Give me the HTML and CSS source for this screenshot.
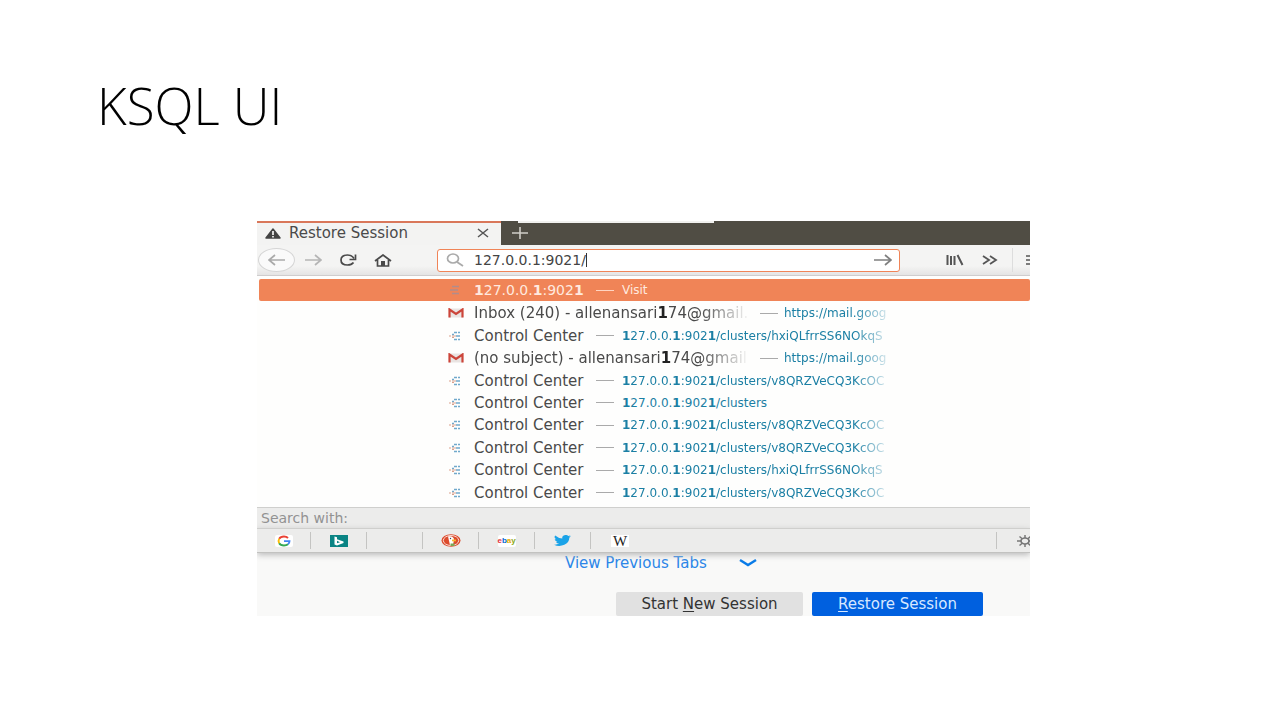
FILE: index.html
```html
<!DOCTYPE html>
<html lang="en">
<head>
<meta charset="utf-8">
<title>KSQL UI</title>
<link rel="stylesheet" href="styles.css">
</head>
<body>
<svg class="defs" aria-hidden="true">
  <symbol id="gmail" viewBox="0 0 16 10"><path d="M1 .5h14v9H1z" fill="#e9e4e2"/><path d="M1.500 9.500V1.500L8 6l6.500-4.500v8" fill="none" stroke="#cc453a" stroke-width="2.200"/></symbol>
  <symbol id="center" viewBox="0 0 14 10"><path d="M6 1.500h3M10 1.500h2M4 3.500h2M6 8.500h3M10 8.500h2M8 5h4" stroke="#70a9cc" stroke-width="1.300"/><path d="M1 5h2M4 5h4M4 6.500h2" stroke="#d9a08c" stroke-width="1.200"/></symbol>
</svg>
<main class="slide">
  <h1 class="title">KSQL UI</h1>
  <section class="browser">
    <div class="tabs">
      <div class="tab">
        <svg width="16" height="11" viewBox="0 0 16 11"><path d="M8 1 15 10H1Z" fill="#444" stroke="#444" stroke-width="1.500" stroke-linejoin="round"/><path d="M8 3v4M8 8v1.500" stroke="#fff" stroke-width="1.600"/></svg>
        <span class="tab-name">Restore Session</span>
        <button class="icon" aria-label="Close tab"><svg width="12" height="10" viewBox="0 0 12 10"><path d="m1 1 10 8M11 1 1 9" stroke="#555" stroke-width="1.500"/></svg></button>
      </div>
      <button class="icon new-tab" aria-label="New tab"><svg width="16" height="12" viewBox="0 0 16 12"><path d="M0 6h16M8 0v12" stroke="#d0cec8" stroke-width="1.600"/></svg></button>
      <span class="edge"></span>
    </div>
    <div class="toolbar">
      <button class="icon back" aria-label="Back"><svg width="18" height="12" viewBox="0 0 18 12"><path d="M17 6H1M7 1 1 6l6 5" fill="none" stroke="#aaa" stroke-width="1.700"/></svg></button>
      <button class="icon nav" aria-label="Forward"><svg width="18" height="12" viewBox="0 0 18 12"><path d="M1 6h16M11 1l6 5-6 5" fill="none" stroke="#b5b5b5" stroke-width="1.700"/></svg></button>
      <button class="icon nav" aria-label="Reload"><svg width="18" height="12" viewBox="0 0 18 12"><path d="M14.500 8.500C13 10.500 11 11 8.500 11 4.500 11 2 9 2 6s2.500-5 6.500-5C11 1 13.500 2 15 4.500" fill="none" stroke="#4a4a4a" stroke-width="1.700"/><path d="M16.500 .5V5.500H10.500" fill="none" stroke="#4a4a4a" stroke-width="1.700"/></svg></button>
      <button class="icon nav" aria-label="Home"><svg width="18" height="13" viewBox="0 0 18 13"><path d="m1 7 8-6 8 6M3.500 6v6h11V6" fill="none" stroke="#4a4a4a" stroke-width="1.700"/><path d="M7 12V7h4v5" fill="#4a4a4a"/></svg></button>
      <label class="address">
        <svg width="18" height="14" viewBox="0 0 18 14"><ellipse cx="7" cy="5.500" rx="5.500" ry="4.500" fill="none" stroke="#aaa" stroke-width="1.700"/><path d="m11 9 6 4" stroke="#aaa" stroke-width="1.800"/></svg>
        <input class="url-input" type="text" value="127.0.0.1:9021/" size="1" aria-label="Address">
        <span class="caret"></span>
        <button class="icon go" aria-label="Go"><svg width="18" height="12" viewBox="0 0 18 12"><path d="M0 6h17M11 1l6 5-6 5" fill="none" stroke="#808080" stroke-width="1.700"/></svg></button>
      </label>
      <button class="icon library" aria-label="Library"><svg width="18" height="12" viewBox="0 0 18 12"><path d="M1.500 1v10M5 2v9M8.500 2v9M11.500 1l5 10" stroke="#555" stroke-width="2"/></svg></button>
      <button class="icon more" aria-label="More tools"><svg width="16" height="10" viewBox="0 0 16 10"><path d="m1 1 6 4-6 4M8 1l6 4-6 4" fill="none" stroke="#555" stroke-width="1.800"/></svg></button>
      <button class="icon menu" aria-label="Menu"><svg width="16" height="10" viewBox="0 0 16 10"><path d="M0 1h16M0 5h16M0 9h16" stroke="#555" stroke-width="1.600"/></svg></button>
    </div>
    <div class="results">
      <div class="row selected">
        <svg class="fav" width="14" height="10" viewBox="0 0 14 10"><path d="M4 1.500h7M2 5h8M4 8.500h7" stroke="#b08c8c" stroke-width="1.500"/></svg>
        <span class="visit-name"><b>1</b>27.0.0.<b>1</b>:902<b>1</b></span><span class="dash"></span><span class="visit">Visit</span>
      </div>
      <div class="list">
        <div class="row"><svg class="fav mail"><use href="#gmail"/></svg><span class="name long">Inbox (240) - allenansari<b>1</b>74@gmail.</span><span class="dash"></span><a class="url" href="#">https://mail.goog</a></div>
        <div class="row"><svg class="fav"><use href="#center"/></svg><span class="name">Control Center</span><span class="dash"></span><a class="url" href="#"><b>1</b>27.0.0.<b>1</b>:902<b>1</b>/clusters/hxiQLfrrSS6NOkqS</a></div>
        <div class="row"><svg class="fav mail"><use href="#gmail"/></svg><span class="name long">(no subject) - allenansari<b>1</b>74@gmail</span><span class="dash"></span><a class="url" href="#">https://mail.goog</a></div>
        <div class="row"><svg class="fav"><use href="#center"/></svg><span class="name">Control Center</span><span class="dash"></span><a class="url" href="#"><b>1</b>27.0.0.<b>1</b>:902<b>1</b>/clusters/v8QRZVeCQ3KcOC</a></div>
        <div class="row"><svg class="fav"><use href="#center"/></svg><span class="name">Control Center</span><span class="dash"></span><a class="url" href="#"><b>1</b>27.0.0.<b>1</b>:902<b>1</b>/clusters</a></div>
        <div class="row"><svg class="fav"><use href="#center"/></svg><span class="name">Control Center</span><span class="dash"></span><a class="url" href="#"><b>1</b>27.0.0.<b>1</b>:902<b>1</b>/clusters/v8QRZVeCQ3KcOC</a></div>
        <div class="row"><svg class="fav"><use href="#center"/></svg><span class="name">Control Center</span><span class="dash"></span><a class="url" href="#"><b>1</b>27.0.0.<b>1</b>:902<b>1</b>/clusters/v8QRZVeCQ3KcOC</a></div>
        <div class="row"><svg class="fav"><use href="#center"/></svg><span class="name">Control Center</span><span class="dash"></span><a class="url" href="#"><b>1</b>27.0.0.<b>1</b>:902<b>1</b>/clusters/hxiQLfrrSS6NOkqS</a></div>
        <div class="row"><svg class="fav"><use href="#center"/></svg><span class="name">Control Center</span><span class="dash"></span><a class="url" href="#"><b>1</b>27.0.0.<b>1</b>:902<b>1</b>/clusters/v8QRZVeCQ3KcOC</a></div>
      </div>
    </div>
    <div class="search-with">Search with:</div>
    <div class="engines">
      <button class="icon engine first" aria-label="Google"><svg width="18" height="12" viewBox="0 0 18 12"><rect width="18" height="12" rx="2" fill="#fff"/><g fill="none" stroke-width="1.900"><path d="M13 3C12 2 10.500 1.500 9 1.500 6.800 1.500 5 2.400 4.200 3.800" stroke="#ea4335"/><path d="M4.200 3.800C3.500 5 3.500 7 4.200 8.200" stroke="#fbbc05"/><path d="M4.200 8.200C5 9.600 6.800 10.500 9 10.500c1.700 0 3-.4 4-1.200" stroke="#34a853"/><path d="M13 9.300c1-.8 1.500-1.800 1.500-3.200H9" stroke="#4285f4"/></g></svg></button>
      <button class="icon engine" aria-label="Bing"><svg width="18" height="12" viewBox="0 0 18 12"><path d="M0 0h18v12H0z" fill="#0a8484"/><path d="M4.500 1.500 7 2.200V4.200L13.500 6.500V8L7 10.500 4.500 9.500ZM7 5.800V8.300L10 7.200Z" fill="#fff" fill-rule="evenodd"/></svg></button>
      <span class="engine"></span>
      <button class="icon engine" aria-label="DuckDuckGo"><svg width="20" height="13" viewBox="0 0 20 13"><ellipse cx="10" cy="6.500" rx="9.500" ry="6.200" fill="#dc4b2c"/><ellipse cx="10" cy="6.500" rx="7.700" ry="5" fill="none" stroke="#fff" stroke-width=".8"/><path d="M7 2.500c3-1 6 .5 6 3l-1 5.500H9Z" fill="#fff"/><path d="M11 5.500h4v1.800h-4z" fill="#f8b62c"/><path d="M9.500 9.500h4V12h-4z" fill="#78a955"/><circle cx="9.500" cy="4.500" r=".7" fill="#345"/></svg></button>
      <button class="icon engine" aria-label="eBay"><span class="ebay"><span class="e">e</span><span class="b">b</span><span class="a">a</span><span class="y">y</span></span></button>
      <button class="icon engine" aria-label="Twitter"><svg width="17" height="11" viewBox="0 0 24 20" preserveAspectRatio="none"><path d="M24 2.400a10 10 0 0 1-2.800.8A5 5 0 0 0 23.300.5a10 10 0 0 1-3.100 1.200A4.900 4.900 0 0 0 11.800 6.200 14 14 0 0 1 1.700 1.100a4.900 4.900 0 0 0 1.500 6.600A5 5 0 0 1 1 7.100 5 5 0 0 0 4.900 12a5 5 0 0 1-2.200.1 5 5 0 0 0 4.600 3.400A10 10 0 0 1 0 17.500 14 14 0 0 0 21.500 5 10 10 0 0 0 24 2.400Z" fill="#1aa3e8"/></svg></button>
      <button class="icon engine wiki" aria-label="Wikipedia"><span class="w">W</span></button>
      <button class="icon settings" aria-label="Search settings"><svg width="16" height="12" viewBox="0 0 16 12"><ellipse cx="8" cy="6" rx="4" ry="3" fill="none" stroke="#777" stroke-width="1.700"/><path d="M0 6h4M12 6h4M8 0v3M8 9v3M2.500 1.500l3 2.500M10.500 8l3 2.500M13.500 1.500l-3 2.500M5.500 8l-3 2.500" stroke="#777" stroke-width="1.500"/></svg></button>
    </div>
    <div class="page">
      <button class="previous">View Previous Tabs<svg width="18" height="8" viewBox="0 0 18 8"><path d="m1 1 8 5 8-5" fill="none" stroke="#087be8" stroke-width="2.400"/></svg></button>
      <div class="actions">
        <button class="action fresh"><span>Start <u>N</u>ew Session</span></button>
        <button class="action restore"><span><u>R</u>estore Session</span></button>
      </div>
    </div>
  </section>
</main>
</body>
</html>
```

FILE: styles.css
```css
* { box-sizing: border-box; }
body { margin: 0; background: #fff; font-family: "DejaVu Sans", sans-serif; font-size: 14px; color: #4a4a4a; }
button { font: inherit; border: 0; padding: 0; background: none; color: inherit; }
svg { display: block; flex: none; }
.defs { position: absolute; width: 0; height: 0; }
.slide { padding: 73px 250px 0 257px; }
.title { margin: 0 0 84px -160px; font: 300 51px/64px "Open Sans", sans-serif; color: #000; }
.browser { overflow: hidden; background: #fefefd; }
.icon { display: flex; align-items: center; justify-content: center; flex: none; }

.tabs { display: flex; height: 24px; background: #504d44; }
.tab { display: flex; align-items: center; width: 244px; padding: 0 12px 2px 8px; gap: 8px; background: #f3f3f2; border-top: 2px solid #d9775a; }
.tab-name { flex: 1; font-size: 15px; line-height: 20px; white-space: nowrap; }
.new-tab { width: 38px; }
.edge { width: 196px; height: 2px; margin-left: -21px; background: #f1f1ef; }

.toolbar { display: flex; align-items: center; height: 31px; background: linear-gradient(#f4f4f3 70%, #e5e4e4); border-bottom: 1px solid #cfcdce; }
.back { width: 37px; height: 24px; margin: 0 0 0 1px; border: 1px solid #d5d5d5; border-radius: 50%; background: #fafafa; }
.nav { width: 35px; }
.address { display: flex; align-items: center; flex: 1; height: 23px; margin-left: 37px; padding: 0 7px 0 8px; border: 1px solid #f08457; border-radius: 3px; background: #fff; }
.url-input { field-sizing: content; min-width: 0; margin-left: 10px; padding: 0; border: 0; outline: 0; background: none; font: inherit; color: #444; }
.caret { width: 1px; height: 14px; background: #333; }
.go { margin-left: auto; }
.library { margin-left: 46px; }
.more { margin-left: 18px; }
.menu { justify-content: flex-start; width: 18px; height: 24px; margin-left: 14px; padding-left: 13px; border-left: 1px solid #ddd; }

.results { padding: 3px 0 3px; }
.row { display: flex; align-items: center; min-width: 0; padding: 0 136px 0 191px; white-space: nowrap; }
.selected { height: 22px; margin-left: 2px; padding-left: 189px; border-radius: 2px; background: #f08457; color: #ffe9df; }
.list { display: grid; grid-template-rows: repeat(9, 1fr); height: 202px; margin-top: 1px; }
.fav { width: 14px; height: 10px; margin-right: 12px; }
.mail { width: 16px; margin-right: 10px; }
.name { flex: none; min-width: 116px; font-size: 15px; line-height: 20px; }
.long { width: 276px; mask-image: linear-gradient(to right, #000 82%, transparent); }
.visit-name { min-width: 116px; }
.dash { flex: none; width: 18px; height: 1px; margin: 0 8px 0 6px; background: #aaa; }
.selected .dash { background: #ffd5c2; }
.long + .dash { margin-left: 10px; margin-right: 6px; }
.visit, .url { font-size: 12px; line-height: 20px; }
.url { min-width: 0; color: #1b7fa4; text-decoration: none; }
.row:not(:nth-child(5)) > .url { flex: 1; mask-image: linear-gradient(to left, transparent, #000 40px); }
.long b { color: #222; }

.search-with { height: 21px; padding-left: 4px; border-top: 1px solid #cfcfcd; background: #ececeb; line-height: 20px; color: #929292; }
.engines { display: flex; align-items: center; position: relative; height: 25px; border-top: 1px solid #cfcfcd; border-bottom: 1px solid #c2c2c0; background: #ececeb; box-shadow: 0 2px 6px #bbb; }
.engine { flex: none; width: 56px; height: 17px; border-right: 1px solid #c4c4c2; }
.first { width: 54px; }
.wiki { width: 58px; border: 0; }
.w { width: 18px; height: 12px; background: #fff; color: #222; font: 15px/12px "Liberation Serif", serif; text-align: center; }
.ebay { width: 18px; height: 12px; border-radius: 2px; background: #fff; font: bold 8px/11px "Liberation Sans", sans-serif; text-align: center; }
.e { color: #e53238; }
.b { color: #0064d2; }
.a { color: #e8a900; }
.y { color: #86a817; }
.settings { justify-content: flex-start; width: 34px; height: 17px; margin-left: auto; padding-left: 20px; border-left: 1px solid #c4c4c2; overflow: hidden; }

.page { padding: 0 47px 0 0; background: #f9f9f8; }
.previous { display: flex; align-items: center; height: 20px; margin-left: 308px; gap: 32px; font-size: 15px; color: #2b86e8; }
.actions { display: flex; justify-content: flex-end; gap: 9px; padding-top: 19px; }
.action { height: 24px; border-radius: 2px; font-size: 15px; white-space: nowrap; }
.fresh { width: 187px; background: #e1e1e1; color: #333; }
.restore { width: 171px; background: #0060df; color: #d7e8ff; }
.action u { text-underline-offset: 2px; }
```
